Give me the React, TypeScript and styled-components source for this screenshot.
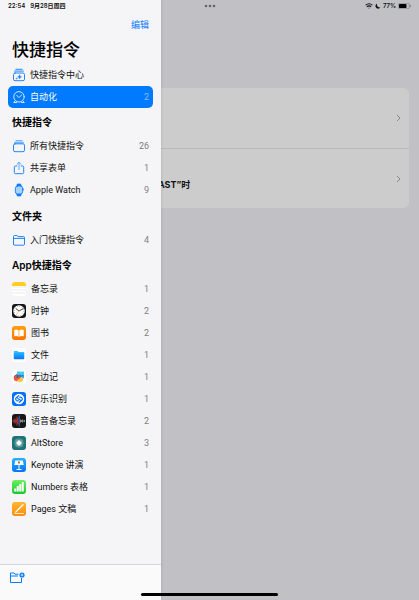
import React from "react";
import styled, { createGlobalStyle } from "styled-components";

const blue = "#0a7aff";

const GlobalStyle = createGlobalStyle`
  * { box-sizing: border-box; }
  body { margin: 0; background: #c1c0c5; }
  body, button { font-family: Inter, "Noto Sans CJK SC", sans-serif; }
  h1, h2, p, ul { margin: 0; padding: 0; }
  svg { display: block; flex: none; }
`;

/* Main view, drawer and system chrome share one grid cell as layers. */
const Screen = styled.div`
  display: grid;
  grid-template: minmax(100vh, auto) / minmax(0, 1fr);
  > * { grid-area: 1 / 1; }
`;

const StatusBar = styled.header`
  align-self: start;
  z-index: 2;
  display: grid;
  grid-template-columns: 1fr auto 1fr;
  align-items: center;
  height: 12px;
  padding: 0 8px;
  font-size: 6px;
  line-height: 12px;
  font-weight: 600;
  color: #111;
`;

const StatusGroup = styled.div<{ $end?: boolean }>`
  display: flex;
  align-items: center;
  justify-content: ${(p) => (p.$end ? "flex-end" : "flex-start")};
  gap: ${(p) => (p.$end ? "2px" : "5px")};
`;

const HomeBar = styled.div`
  align-self: end;
  justify-self: center;
  z-index: 2;
  width: 137px;
  height: 3px;
  margin-bottom: 4px;
  border-radius: 2px;
  background: #000;
`;

const Main = styled.main`
  padding: 88px 10px 0 16px;
`;

const Card = styled.section`
  overflow: hidden;
  border-radius: 6px;
  background: #ccc;
`;

const Automation = styled.button`
  display: flex;
  align-items: center;
  justify-content: space-between;
  width: 100%;
  height: 60px;
  padding: 0 8px 0 142px;
  border: 0;
  background: none;
  color: #111;
  & + & { border-top: 1px solid #b9b9bb; }
`;

const AutomationName = styled.span`
  padding-top: 13px;
  font-size: 9px;
  line-height: 12px;
  font-weight: 700;
`;

const Drawer = styled.aside`
  z-index: 1;
  display: flex;
  flex-direction: column;
  width: 161px;
  background: #f5f5f7;
  box-shadow: 0 0 3px rgba(0, 0, 0, 0.14);
`;

const DrawerHead = styled.div`
  display: flex;
  flex-direction: column;
  padding: 18px 12px 0;
`;

const EditButton = styled.button`
  align-self: flex-end;
  padding: 0;
  border: 0;
  background: none;
  color: ${blue};
  font-size: 9px;
  line-height: 14px;
`;

const Title = styled.h1`
  padding-top: 4px;
  font-size: 17px;
  line-height: 28px;
  font-weight: 500;
  color: #000;
`;

const Nav = styled.nav`
  flex: 1;
  padding: 0 8px;
`;

const Section = styled.section<{ $spaced?: boolean }>`
  padding-bottom: ${(p) => (p.$spaced ? "1px" : "0")};
`;

const SectionTitle = styled.h2`
  height: 27px;
  padding: 2px 4px 0;
  font-size: 10px;
  line-height: 25px;
  font-weight: 600;
  color: #000;
`;

const List = styled.ul`
  list-style: none;
`;

const Item = styled.a<{ $active?: boolean; $app?: boolean }>`
  display: flex;
  align-items: center;
  gap: ${(p) => (p.$app ? "5px" : "4px")};
  height: 22px;
  padding: 0 4px;
  border-radius: 5px;
  background: ${(p) => (p.$active ? "#007aff" : "transparent")};
  color: ${(p) => (p.$active ? "#fff" : "#111")};
  font-family: Roboto, "Noto Sans CJK SC", sans-serif;
  font-size: 9px;
  line-height: 22px;
  text-decoration: none;
  white-space: nowrap;
`;

const Count = styled.span<{ $active?: boolean }>`
  margin-left: auto;
  color: ${(p) => (p.$active ? "#80bcff" : "#7e7e82")};
`;

const Toolbar = styled.footer`
  display: flex;
  align-items: flex-start;
  height: 36px;
  padding: 6px 9px;
  border-top: 1px solid #d9d9dc;
  background: #fafafb;
`;

const IconButton = styled.button`
  padding: 0;
  border: 0;
  background: none;
`;

const Line = ({ children, color = blue }: { children: React.ReactNode; color?: string }) => (
  <svg width="14" height="14" viewBox="0 0 14 14" fill="none" stroke={color} strokeWidth="0.9" strokeLinecap="round" strokeLinejoin="round" aria-hidden="true">
    {children}
  </svg>
);

/* Gradients and the rounded clip shared by all app tiles. */
const TileDefs = () => (
  <svg width="0" height="0" aria-hidden="true">
    <defs>
      <linearGradient id="orange" x2="0" y2="1"><stop stopColor="#ff9f0a" /><stop offset="1" stopColor="#ff7300" /></linearGradient>
      <linearGradient id="pages" x2="0" y2="1"><stop stopColor="#ffb62e" /><stop offset="1" stopColor="#ff8c0d" /></linearGradient>
      <linearGradient id="blue" x2="0" y2="1"><stop stopColor="#21b3ff" /><stop offset="1" stopColor="#0874f5" /></linearGradient>
      <linearGradient id="green" x2="0" y2="1"><stop stopColor="#6cf060" /><stop offset="1" stopColor="#17c92d" /></linearGradient>
      <clipPath id="tile"><rect width="28" height="28" rx="6" /></clipPath>
    </defs>
  </svg>
);

const Tile = ({ children, fill }: { children: React.ReactNode; fill: string }) => (
  <svg width="14" height="14" viewBox="0 0 28 28" aria-hidden="true">
    <g clipPath="url(#tile)">
      <rect width="28" height="28" fill={fill} />
      {children}
    </g>
  </svg>
);

const GalleryIcon = () => (
  <Line>
    <path d="M3.8 1.3h6.4M2.6 3.1h8.800" />
    <rect x="1.5" y="5" width="11" height="7.7" rx="1.5" />
    <path d="M7.6 6.8l.6 1.5 1.5.6-1.5.6-.6 1.5-.6-1.5-1.5-.6 1.5-.6z" fill={blue} strokeWidth="0.3" />
    <path d="M4.7 9.9v1.2M4.1 10.5h1.2" strokeWidth="0.5" />
  </Line>
);
const ClockIcon = () => (
  <Line color="#e3f0ff">
    <circle cx="7" cy="6.8" r="5.2" />
    <path d="M4.7 5.3L6.8 7.6 9.6 5.1M3.1 10.9l-1.4 1.6h3M10.9 10.9l1.4 1.6h-3" />
  </Line>
);
const StackIcon = () => (
  <Line>
    <path d="M4 1.6h6M2.7 3.5h8.6" stroke="#73b5ff" strokeWidth="1.3" />
    <rect x="1.5" y="4.8" width="11" height="7.9" rx="1.5" />
  </Line>
);
const ShareIcon = () => (
  <Line>
    <path d="M4.800 5H3.5Q2.3 5 2.3 6.2v5.2q0 1.3 1.2 1.3h7q1.2 0 1.2-1.3V6.2Q11.7 5 10.5 5H9.2" />
    <path d="M7 8.500v-7M5 3.3l2-2 2 2" stroke="#4ba1ff" />
  </Line>
);
const WatchIcon = () => (
  <Line>
    <path d="M4.8 3.4l.5-2.3h3.4l.5 2.3M4.8 10.6l.5 2.3h3.4l.5-2.3" fill={blue} />
    <rect x="3.4" y="3" width="7.2" height="8" rx="2.2" fill="#a9d1ff" />
    <path d="M11.2 5.7v1.5" />
  </Line>
);
const FolderIcon = () => (
  <Line>
    <path d="M1.5 11.2V3.5q0-1 1-1h2.4l1.2 1.1h5.4q1 0 1 1v6.6q0 1-1 1h-9q-1 0-1-1zM1.5 5.4h11" />
  </Line>
);

const NotesIcon = () => (
  <Tile fill="#fff">
    <path fill="#ffcd20" d="M0 0h28v8H0z" />
    <path stroke="#d5d5d9" d="M0 10h28M0 16h28M0 22h28" />
  </Tile>
);
const ClockApp = () => (
  <Tile fill="#161617">
    <circle cx="14" cy="14" r="11.5" fill="#fff" />
    <circle cx="14" cy="14" r="9.5" fill="none" stroke="#555" strokeWidth="1.6" strokeDasharray="1 3.97" />
    <path d="M7.5 9L14 14l9-5" fill="none" stroke="#111" strokeWidth="1.6" />
    <path d="M15 12L9 22" stroke="#f59a23" />
  </Tile>
);
const BooksIcon = () => (
  <Tile fill="url(#orange)">
    <path fill="#fff" d="M13.4 9Q9 5.8 4.5 8v12.5q4.5-1.8 8.9.9zM14.6 9q4.4-3.2 8.9-1v12.5q-4.5-1.8-8.9.9z" />
  </Tile>
);
const FilesIcon = () => (
  <Tile fill="#fff">
    <path fill="#36b8fa" d="M3.5 7.5Q3.5 6 5 6h6l2 2h10q1.5 0 1.5 1.5V12h-21z" />
    <rect x="3.5" y="10" width="21" height="12.500" rx="1.5" fill="url(#blue)" />
  </Tile>
);
const FreeformIcon = () => (
  <Tile fill="#fff">
    <path fill="#3fd0f3" d="M10 3h14v12H10z" />
    <circle cx="10" cy="16" r="6.5" fill="#f4533f" />
    <path fill="#ffc53a" d="M10 20l11-6 1 8-8 3z" />
    <path fill="none" stroke="#1b66b4" strokeWidth="1.8" strokeLinecap="round" d="M5 13q5-6 6-3t-1 6q5-8 7-6t-1 5q3-4 6-5v6" />
  </Tile>
);
const ShazamIcon = () => (
  <Tile fill="#0870f7">
    <circle cx="14" cy="14" r="10.5" fill="#fff" />
    <path fill="none" stroke="#0870f7" strokeWidth="2.4" strokeLinecap="round" d="M12.5 17.5q-2 1-4-.8-2.600-2.600 0-5.300L13.5 7.500M15.500 10.500q2-1 4 .8 2.600 2.600 0 5.300L14.500 20.500M11.5 13l5 3" />
  </Tile>
);
const VoiceIcon = () => (
  <Tile fill="#171719">
    <path fill="none" stroke="#ed3e3e" strokeWidth="1.6" d="M2 13v2M4 11v6M6 9v10M8 11v6M10 5v18M12 8v12" />
    <path stroke="#2c9dff" strokeWidth="1.4" d="M14.5 3v22" />
    <path stroke="#d4d4d4" strokeWidth="1.2" d="M17 11v6M19 12v4M21 11v6M23 13v2M25 12v4" />
  </Tile>
);
const AltStoreIcon = () => (
  <Tile fill="#1d7378">
    <path fill="#4b9293" d="M14 3l11 11-11 11L3 14z" />
    <path fill="#a2c9c8" d="M9 5l14 14-4 4L5 9zM19 5L5 19l4 4L23 9z" opacity=".4" />
    <path fill="#fff" d="M14 8l6 6-6 6-6-6z" />
  </Tile>
);
const KeynoteIcon = () => (
  <Tile fill="url(#blue)">
    <path fill="#fff" d="M6.5 5h15l2 9h-19zM13 14h2v8h-2zM9 22h10v1.8H9z" />
    <path fill="#3a9b4c" d="M12 7h2v3h-2z" />
    <path fill="#f25b3a" d="M14 7h2v3h-2z" />
    <path fill="#f6b32b" d="M12 10h4v1.5h-4z" />
  </Tile>
);
const NumbersIcon = () => (
  <Tile fill="url(#green)">
    <path fill="#fff" d="M4.5 17h4v6h-4zM9.5 12h4v11h-4zM14.5 8h4v15h-4zM19.5 4h4v19h-4z" />
  </Tile>
);
const PagesIcon = () => (
  <Tile fill="url(#pages)">
    <path stroke="#fff" strokeWidth="2.6" strokeLinecap="round" d="M8 19.5L22 5.5" />
    <path stroke="#fff" strokeWidth="1.5" strokeLinecap="round" d="M6 23h17M6.5 21l.8-1" />
  </Tile>
);

const Chevron = () => (
  <svg width="5" height="8" viewBox="0 0 5 8" fill="none" stroke="#88888a" aria-hidden="true"><path d="M1 1l3 3-3 3" /></svg>
);

type Entry = { name: string; count?: number; icon: () => React.ReactElement; active?: boolean };
type Group = { title?: string; app?: boolean; spaced?: boolean; entries: Entry[] };

const groups: Group[] = [
  { entries: [
    { name: "快捷指令中心", icon: GalleryIcon },
    { name: "自动化", count: 2, icon: ClockIcon, active: true },
  ] },
  { title: "快捷指令", spaced: true, entries: [
    { name: "所有快捷指令", count: 26, icon: StackIcon },
    { name: "共享表单", count: 1, icon: ShareIcon },
    { name: "Apple Watch", count: 9, icon: WatchIcon },
  ] },
  { title: "文件夹", entries: [{ name: "入门快捷指令", count: 4, icon: FolderIcon }] },
  { title: "App快捷指令", app: true, entries: [
    { name: "备忘录", count: 1, icon: NotesIcon },
    { name: "时钟", count: 2, icon: ClockApp },
    { name: "图书", count: 2, icon: BooksIcon },
    { name: "文件", count: 1, icon: FilesIcon },
    { name: "无边记", count: 1, icon: FreeformIcon },
    { name: "音乐识别", count: 1, icon: ShazamIcon },
    { name: "语音备忘录", count: 2, icon: VoiceIcon },
    { name: "AltStore", count: 3, icon: AltStoreIcon },
    { name: "Keynote 讲演", count: 1, icon: KeynoteIcon },
    { name: "Numbers 表格", count: 1, icon: NumbersIcon },
    { name: "Pages 文稿", count: 1, icon: PagesIcon },
  ] },
];

export default function App() {
  return (
    <>
      <GlobalStyle />
      <Screen lang="zh-CN">
        <Main>
          <Card>
            <Automation aria-label="自动化 1"><span /><Chevron /></Automation>
            <Automation><AutomationName>AST”时</AutomationName><Chevron /></Automation>
          </Card>
        </Main>
        <Drawer>
          <DrawerHead>
            <EditButton>编辑</EditButton>
            <Title>快捷指令</Title>
          </DrawerHead>
          <Nav>
            <TileDefs />
            {groups.map((group, i) => (
              <Section key={i} $spaced={group.spaced}>
                {group.title && <SectionTitle>{group.title}</SectionTitle>}
                <List>
                  {group.entries.map(({ name, count, icon: Icon, active }) => (
                    <li key={name}>
                      <Item href="#" $active={active} $app={group.app} aria-current={active ? "page" : undefined}>
                        <Icon />
                        <span>{name}</span>
                        {count !== undefined && <Count $active={active}>{count}</Count>}
                      </Item>
                    </li>
                  ))}
                </List>
              </Section>
            ))}
          </Nav>
          <Toolbar>
            <IconButton aria-label="新建文件夹">
              <svg width="16" height="13" viewBox="0 0 16 13" fill="none" stroke={blue} strokeLinejoin="round">
                <path d="M12.5 7v4.5h-11V2H5l1 1.2h3.5M1.5 5H9" />
                <circle cx="13" cy="4" r="2.6" fill={blue} stroke="none" />
                <path d="M13 2.700v2.600M11.7 4h2.600" stroke="#fff" strokeWidth="0.7" />
              </svg>
            </IconButton>
          </Toolbar>
        </Drawer>
        <StatusBar>
          <StatusGroup><span>22:54</span><span>9月28日周四</span></StatusGroup>
          <svg width="12" height="4" viewBox="0 0 12 4" fill="#66656a" aria-hidden="true">
            <circle cx="2" cy="2" r="1.3" /><circle cx="6" cy="2" r="1.3" /><circle cx="10" cy="2" r="1.3" />
          </svg>
          <StatusGroup $end>
            <svg width="8" height="6" viewBox="0 0 8 6" fill="none" stroke="#111" strokeWidth="1.1" aria-hidden="true">
              <path d="M.6 2.2q3.4-2.800 6.800 0M1.9 3.700q2.100-1.700 4.200 0" /><circle cx="4" cy="5" r=".5" fill="#111" stroke="none" />
            </svg>
            <svg width="6" height="6" viewBox="0 0 6 6" fill="#111" aria-hidden="true"><path d="M2 .5a2.7 2.7 0 1 0 3.5 3.8A3 3 0 0 1 2 .5z" /></svg>
            <span>77%</span>
            <svg width="13" height="6" viewBox="0 0 13 6" aria-hidden="true">
              <rect x=".3" y=".3" width="11" height="5.4" rx="1.5" fill="none" stroke="#77767a" strokeWidth=".6" />
              <rect x="1" y="1" width="7.5" height="4" rx=".8" fill="#000" /><path d="M12.3 2v2" stroke="#77767a" />
            </svg>
          </StatusGroup>
        </StatusBar>
        <HomeBar />
      </Screen>
    </>
  );
}
